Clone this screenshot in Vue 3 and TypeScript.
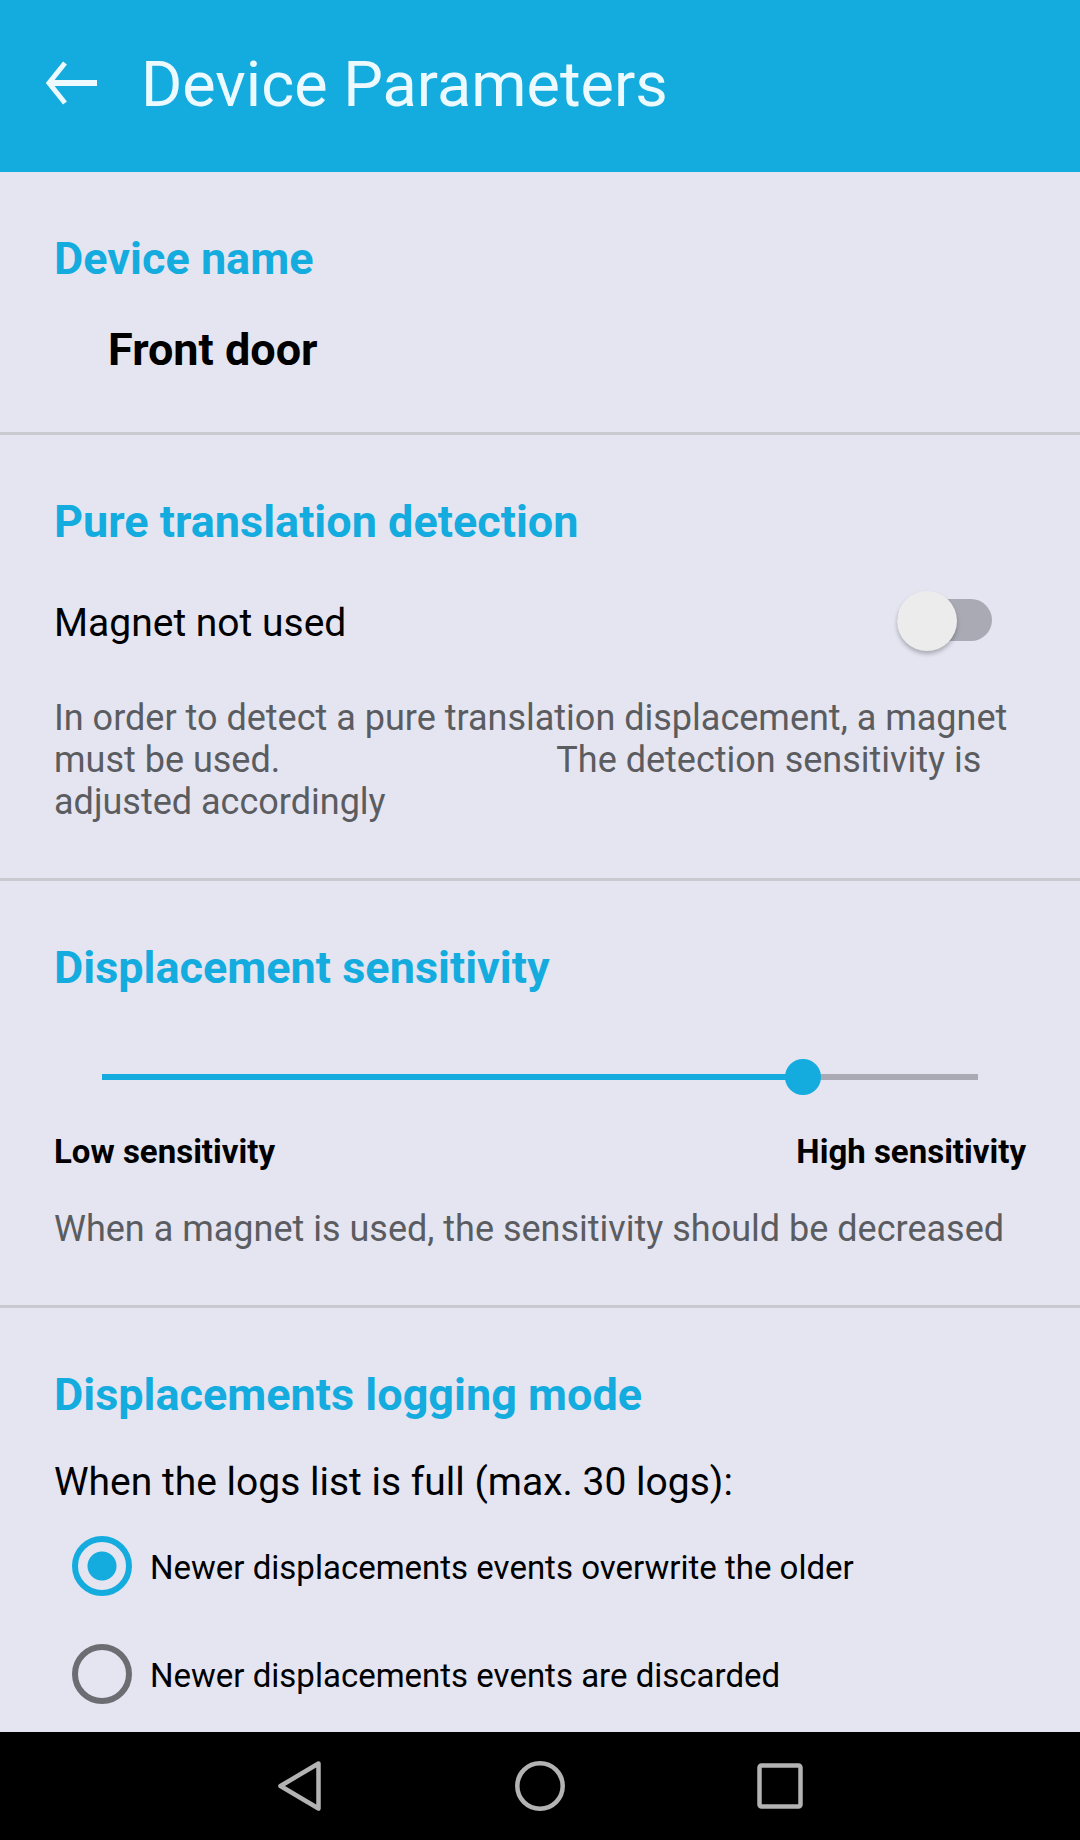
<script setup lang="ts">
import { computed, ref } from 'vue'

interface LoggingMode {
  value: string
  label: string
}

const deviceName = ref<string>('Front door')
const magnetUsed = ref<boolean>(false)
const sensitivity = ref<number>(80)
const loggingMode = ref<string>('overwrite')

const loggingModes: LoggingMode[] = [
  { value: 'overwrite', label: 'Newer displacements events overwrite the older' },
  { value: 'discard', label: 'Newer displacements events are discarded' },
]

const magnetLabel = computed<string>(() => (magnetUsed.value ? 'Magnet used' : 'Magnet not used'))

const magnetHint =
  'In order to detect a pure translation displacement, a magnet must be used.' +
  ' '.repeat(31) +
  'The detection sensitivity is adjusted accordingly'
</script>

<template>
  <div class="screen">
    <header class="app-bar">
      <button class="back" type="button" aria-label="Back">
        <svg width="54" height="54" viewBox="0 0 54 54" fill="none" stroke="currentColor">
          <path stroke-width="6" d="M54 25H6" />
          <path stroke-width="5" d="M22 5L6 25L22 45" />
        </svg>
      </button>
      <h1 class="title">Device Parameters</h1>
    </header>

    <main class="content">
      <section class="section">
        <h2 class="heading">Device name</h2>
        <p class="device-name">{{ deviceName }}</p>
      </section>

      <section class="section">
        <h2 class="heading">Pure translation detection</h2>
        <div class="switch-row">
          <label class="text" for="magnet">{{ magnetLabel }}</label>
          <input id="magnet" v-model="magnetUsed" class="switch" type="checkbox" role="switch" />
        </div>
        <p class="hint magnet-hint">{{ magnetHint }}</p>
      </section>

      <section class="section">
        <h2 id="sensitivity-heading" class="heading">Displacement sensitivity</h2>
        <input
          v-model.number="sensitivity"
          class="slider"
          type="range"
          min="0"
          max="100"
          aria-labelledby="sensitivity-heading"
          :style="{ '--level': sensitivity + '%' }"
        />
        <div class="scale">
          <span>Low sensitivity</span>
          <span>High sensitivity</span>
        </div>
        <p class="hint sensitivity-hint">When a magnet is used, the sensitivity should be decreased</p>
      </section>

      <section class="section">
        <h2 class="heading">Displacements logging mode</h2>
        <p id="logging-text" class="text logging-text">When the logs list is full (max. 30 logs):</p>
        <div class="options" role="radiogroup" aria-labelledby="logging-text">
          <label v-for="mode in loggingModes" :key="mode.value" class="option">
            <input v-model="loggingMode" class="radio" type="radio" name="logging-mode" :value="mode.value" />
            <span class="option-label">{{ mode.label }}</span>
          </label>
        </div>
      </section>
    </main>

    <nav class="system-bar" aria-label="System">
      <button class="system-button" type="button" aria-label="Back">
        <svg width="60" height="60" viewBox="0 0 60 60">
          <path d="M48.5 7.5L10.5 30L48.5 52.5Z" />
        </svg>
      </button>
      <button class="system-button" type="button" aria-label="Home">
        <svg width="60" height="60" viewBox="0 0 60 60">
          <circle cx="30" cy="30" r="22.7" />
        </svg>
      </button>
      <button class="system-button" type="button" aria-label="Recent apps">
        <svg width="60" height="60" viewBox="0 0 60 60">
          <rect x="9.5" y="9.5" width="41" height="41" rx="2" />
        </svg>
      </button>
    </nav>
  </div>
</template>

<style>
body {
  margin: 0;
  background: #e4e5f1;
}
</style>

<style scoped>
.screen {
  --accent: #14acdf;
  display: flex;
  flex-direction: column;
  min-height: 100vh;
  background: #e4e5f1;
  color: #000;
  font-family: Roboto, "Noto Sans", sans-serif;
}

h1,
h2,
p {
  margin: 0;
}

button {
  display: flex;
  align-items: center;
  justify-content: center;
  padding: 0;
  border: 0;
  background: none;
  color: inherit;
}

.app-bar {
  display: flex;
  align-items: center;
  gap: 44px;
  box-sizing: border-box;
  height: 172px;
  padding: 0 43px 2px;
  background: var(--accent);
  color: #ecf9fe;
}

.title {
  font-size: 63px;
  font-weight: 400;
  line-height: 74px;
}

.content {
  flex: 1;
}

.section {
  padding: 60px 54px 55px;
}

.section + .section {
  border-top: 3px solid #c9cacf;
}

.section:last-child {
  padding-bottom: 28px;
}

.heading {
  color: var(--accent);
  font-size: 45px;
  font-weight: 700;
  line-height: 54px;
}

.device-name {
  margin: 37px 54px 0;
  font-size: 45px;
  font-weight: 700;
  line-height: 54px;
}

.text {
  font-size: 39px;
  line-height: 46px;
}

.hint {
  color: #5b5c60;
  font-size: 36px;
  line-height: 42px;
}

.switch-row {
  display: flex;
  align-items: center;
  justify-content: space-between;
  margin-top: 42px;
  padding-right: 34px;
}

.switch {
  position: relative;
  width: 95px;
  height: 64px;
  margin: 0;
  appearance: none;
}

.switch::before {
  content: "";
  position: absolute;
  top: 8px;
  left: 0;
  width: 95px;
  height: 42px;
  border-radius: 21px;
  background: #a9aab3;
}

.switch::after {
  content: "";
  position: absolute;
  top: 0;
  left: 0;
  width: 60px;
  height: 60px;
  border-radius: 50%;
  background: #ececec;
  box-shadow: 0 3px 4px rgba(0, 0, 0, 0.25);
}

.switch:checked::before {
  background: #8acdea;
}

.switch:checked::after {
  left: 35px;
  background: var(--accent);
}

.magnet-hint {
  margin-top: 42px;
  white-space: pre-wrap;
}

.slider {
  display: block;
  box-sizing: border-box;
  width: calc(100% - 60px);
  height: 36px;
  margin: 64px 30px 0;
  padding: 0;
  appearance: none;
  background: none;
}

.slider::-webkit-slider-runnable-track {
  height: 36px;
  background:
    linear-gradient(to right, var(--accent) var(--level), #a9aab3 var(--level))
    center / calc(100% - 36px) 6px no-repeat;
}

.slider::-webkit-slider-thumb {
  width: 36px;
  height: 36px;
  border-radius: 50%;
  appearance: none;
  background: var(--accent);
}

.scale {
  display: flex;
  justify-content: space-between;
  margin-top: 37px;
  font-size: 33px;
  font-weight: 700;
  line-height: 39px;
}

.sensitivity-hint,
.logging-text {
  margin-top: 37px;
}

.options {
  display: flex;
  flex-direction: column;
  gap: 48px;
  margin: 31px 18px 0;
}

.option {
  display: flex;
  align-items: center;
  gap: 18px;
}

.option-label {
  padding-top: 3px;
  font-size: 33px;
  line-height: 39px;
}

.radio {
  box-sizing: border-box;
  width: 60px;
  height: 60px;
  margin: 0;
  border: 6px solid #6c6d73;
  border-radius: 50%;
  appearance: none;
}

.radio:checked {
  border-color: var(--accent);
  background: radial-gradient(circle, var(--accent) 14px, transparent 15px);
}

.system-bar {
  display: flex;
  align-items: center;
  justify-content: center;
  gap: 180px;
  height: 108px;
  background: #000;
  color: #b3b3b3;
}

.system-button svg {
  fill: none;
  stroke: currentColor;
  stroke-width: 4.5;
  stroke-linejoin: round;
}
</style>
